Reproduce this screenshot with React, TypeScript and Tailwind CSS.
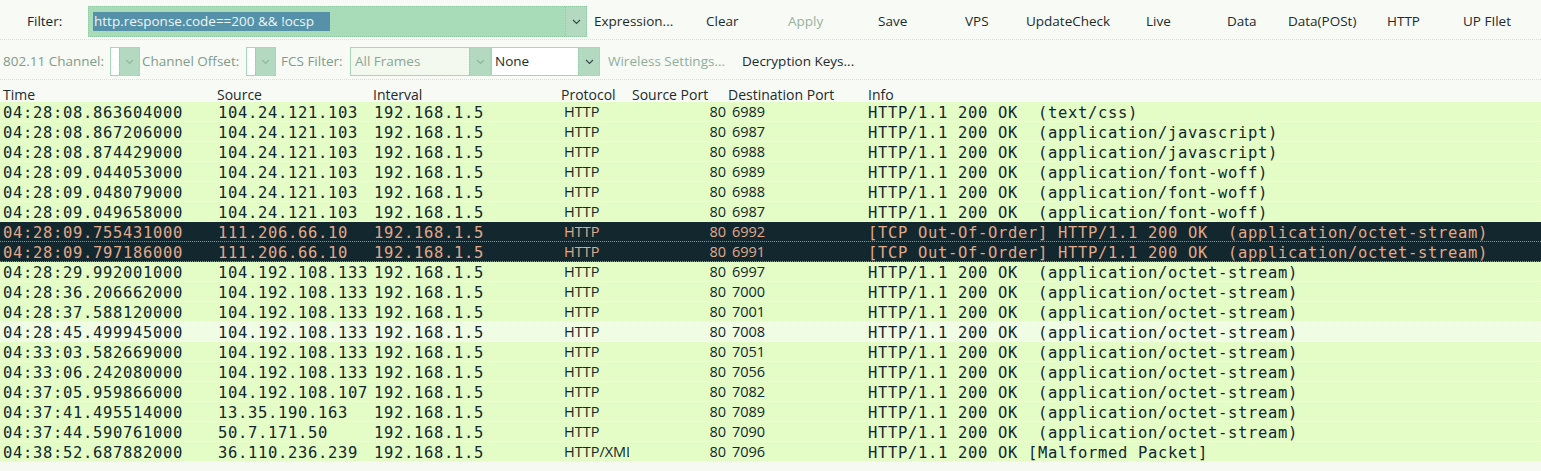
import React from "react";

type Row = {
  time: string;
  src: string;
  dst: string;
  proto: string;
  sport: string;
  dport: string;
  info: string;
  kind?: "bad" | "light";
};

const ok = "HTTP/1.1 200 OK  ";

const rows: Row[] = [
  { time: "04:28:08.863604000", src: "104.24.121.103", dst: "192.168.1.5", proto: "HTTP", sport: "80", dport: "6989", info: ok + "(text/css)" },
  { time: "04:28:08.867206000", src: "104.24.121.103", dst: "192.168.1.5", proto: "HTTP", sport: "80", dport: "6987", info: ok + "(application/javascript)" },
  { time: "04:28:08.874429000", src: "104.24.121.103", dst: "192.168.1.5", proto: "HTTP", sport: "80", dport: "6988", info: ok + "(application/javascript)" },
  { time: "04:28:09.044053000", src: "104.24.121.103", dst: "192.168.1.5", proto: "HTTP", sport: "80", dport: "6989", info: ok + "(application/font-woff)" },
  { time: "04:28:09.048079000", src: "104.24.121.103", dst: "192.168.1.5", proto: "HTTP", sport: "80", dport: "6988", info: ok + "(application/font-woff)" },
  { time: "04:28:09.049658000", src: "104.24.121.103", dst: "192.168.1.5", proto: "HTTP", sport: "80", dport: "6987", info: ok + "(application/font-woff)" },
  { time: "04:28:09.755431000", src: "111.206.66.10", dst: "192.168.1.5", proto: "HTTP", sport: "80", dport: "6992", info: "[TCP Out-Of-Order] " + ok + "(application/octet-stream)", kind: "bad" },
  { time: "04:28:09.797186000", src: "111.206.66.10", dst: "192.168.1.5", proto: "HTTP", sport: "80", dport: "6991", info: "[TCP Out-Of-Order] " + ok + "(application/octet-stream)", kind: "bad" },
  { time: "04:28:29.992001000", src: "104.192.108.133", dst: "192.168.1.5", proto: "HTTP", sport: "80", dport: "6997", info: ok + "(application/octet-stream)" },
  { time: "04:28:36.206662000", src: "104.192.108.133", dst: "192.168.1.5", proto: "HTTP", sport: "80", dport: "7000", info: ok + "(application/octet-stream)" },
  { time: "04:28:37.588120000", src: "104.192.108.133", dst: "192.168.1.5", proto: "HTTP", sport: "80", dport: "7001", info: ok + "(application/octet-stream)" },
  { time: "04:28:45.499945000", src: "104.192.108.133", dst: "192.168.1.5", proto: "HTTP", sport: "80", dport: "7008", info: ok + "(application/octet-stream)", kind: "light" },
  { time: "04:33:03.582669000", src: "104.192.108.133", dst: "192.168.1.5", proto: "HTTP", sport: "80", dport: "7051", info: ok + "(application/octet-stream)" },
  { time: "04:33:06.242080000", src: "104.192.108.133", dst: "192.168.1.5", proto: "HTTP", sport: "80", dport: "7056", info: ok + "(application/octet-stream)" },
  { time: "04:37:05.959866000", src: "104.192.108.107", dst: "192.168.1.5", proto: "HTTP", sport: "80", dport: "7082", info: ok + "(application/octet-stream)" },
  { time: "04:37:41.495514000", src: "13.35.190.163", dst: "192.168.1.5", proto: "HTTP", sport: "80", dport: "7089", info: ok + "(application/octet-stream)" },
  { time: "04:37:44.590761000", src: "50.7.171.50", dst: "192.168.1.5", proto: "HTTP", sport: "80", dport: "7090", info: ok + "(application/octet-stream)" },
  { time: "04:38:52.687882000", src: "36.110.236.239", dst: "192.168.1.5", proto: "HTTP/XML", sport: "80", dport: "7096", info: "HTTP/1.1 200 OK [Malformed Packet]" },
];

const buttons = [
  { label: "Expression...", w: "w-[112px]" },
  { label: "Clear", w: "w-[82px]" },
  { label: "Apply", w: "w-[90px]", dim: true },
  { label: "Save", w: "w-[87px]" },
  { label: "VPS", w: "w-[61px]" },
  { label: "UpdateCheck", w: "w-[120px]" },
  { label: "Live", w: "w-[81px]" },
  { label: "Data", w: "w-[61px]" },
  { label: "Data(POSt)", w: "w-[99px]" },
  { label: "HTTP", w: "w-[76px]" },
  { label: "UP FIlet", w: "w-[70px]" },
];

const Chevron = ({ dark }: { dark?: boolean }) => (
  <svg width="9" height="6" viewBox="0 0 9 6">
    <path d="M1 1l3.5 3.5L8 1" fill="none" stroke={dark ? "#3a4a48" : "#8fb89c"} strokeWidth="1.2" />
  </svg>
);

const Arrow = ({ dark }: { dark?: boolean }) => (
  <div className="w-[21px] h-full flex items-center justify-center bg-[#b3dac1] border-l border-dotted border-[#93c7a5]">
    <Chevron dark={dark} />
  </div>
);

const gridCols = "grid grid-cols-[215px_156px_188px_70px_97px_139px_1fr]";
const mono = "font-['DejaVu_Sans_Mono',monospace] text-[15.5px] tracking-[0.67px] whitespace-pre";
const prop = "text-[14.5px] leading-[20px] mb-[3px]";

const App = () => {
  return (
    <div className="w-[1541px] h-[471px] overflow-hidden bg-[#f5f9f1] text-[#12272e] font-['Open_Sans',sans-serif]">
      {/* filter toolbar */}
      <div className="h-[40px] pt-[4px] flex items-center border-b border-dotted border-[#cfe8c2] text-[13.5px] bg-[#f7faf5]">
        <div className="w-[88px] pl-[27px]">Filter:</div>
        <div className="w-[499px] h-[31px] flex bg-[#a8dcb8] border border-dotted border-[#8fcaa2]">
          <div className="flex-1 flex items-center pl-[4px]">
            <span className="bg-[#5591a8] text-[#eef6f8] h-[19px] leading-[19px] px-[1px] w-[237px]">http.response.code==200 &amp;&amp; !ocsp</span>
          </div>
          <Arrow dark />
        </div>
        <div className="flex ml-[7px]">
          {buttons.map((b) => (
            <div key={b.label} className={`${b.w} ${b.dim ? "text-[#98b2a2]" : "text-[#1d2b2b]"} whitespace-nowrap`}>
              {b.label}
            </div>
          ))}
        </div>
      </div>

      {/* wireless toolbar */}
      <div className="h-[40px] pt-[4px] flex items-center border-b border-dotted border-[#cfe8c2] text-[13.5px] bg-[#f7faf5]">
        <div className="pl-[3px] w-[110px] text-[#7f9c8b]">802.11 Channel:</div>
        <div className="w-[30px] h-[29px] flex border border-[#a6d6b6] bg-white">
          <div className="w-[8px]" />
          <Arrow />
        </div>
        <div className="pl-[2px] w-[106px] text-[#7f9c8b]">Channel Offset:</div>
        <div className="w-[30px] h-[29px] flex border border-[#a6d6b6] bg-white">
          <div className="w-[8px]" />
          <Arrow />
        </div>
        <div className="pl-[5px] w-[74px] text-[#7f9c8b]">FCS Filter:</div>
        <div className="w-[141px] h-[29px] flex border border-[#a6d6b6] bg-[#f4f9ef]">
          <div className="flex-1 flex items-center pl-[4px] text-[#8aa596]">All Frames</div>
          <Arrow />
        </div>
        <div className="w-[109px] h-[29px] flex border border-[#a6d6b6] bg-white">
          <div className="flex-1 flex items-center pl-[3px] text-[#1d2b2b]">None</div>
          <Arrow dark />
        </div>
        <div className="pl-[8px] w-[142px] text-[#8fae9c]">Wireless Settings...</div>
        <div className="text-[#1d2b2b]">Decryption Keys...</div>
      </div>

      {/* column header */}
      <div className={`${gridCols} h-[22px] pt-[4px] items-center text-[14px] text-[#1d2b2b] bg-[#f7faf5]`}>
        <div className="pl-[3px]">Time</div>
        <div className="pl-[2px]">Source</div>
        <div className="pl-[2px]">Interval</div>
        <div className="pl-[2px]">Protocol</div>
        <div className="pl-[3px] whitespace-nowrap">Source Port</div>
        <div className="pl-[2px] whitespace-nowrap">Destination Port</div>
        <div className="pl-[3px]">Info</div>
      </div>

      {/* packet list */}
      <div>
        {rows.map((r) => {
          const bg =
            r.kind === "bad"
              ? "bg-[#12272e] text-[#e2a98a] border-[#7c9a94]"
              : r.kind === "light"
              ? "bg-[#f1fce4] text-[#12272e] border-white"
              : "bg-[#e4fcc6] text-[#12272e] border-white";
          return (
            <div key={r.time} className={`${gridCols} h-[20px] items-center border-b border-dotted ${bg}`}>
              <div className={`pl-[3px] ${mono}`}>{r.time}</div>
              <div className={`pl-[3px] ${mono}`}>{r.src}</div>
              <div className={`pl-[3px] ${mono}`}>{r.dst}</div>
              <div className={`pl-[5px] ${prop} whitespace-nowrap overflow-hidden`}>{r.proto}</div>
              <div className={`text-right ${prop}`}>{r.sport}</div>
              <div className={`pl-[6px] ${prop}`}>{r.dport}</div>
              <div className={`pl-[3px] ${mono}`}>{r.info}</div>
            </div>
          );
        })}
      </div>
    </div>
  );
};

export default App;
